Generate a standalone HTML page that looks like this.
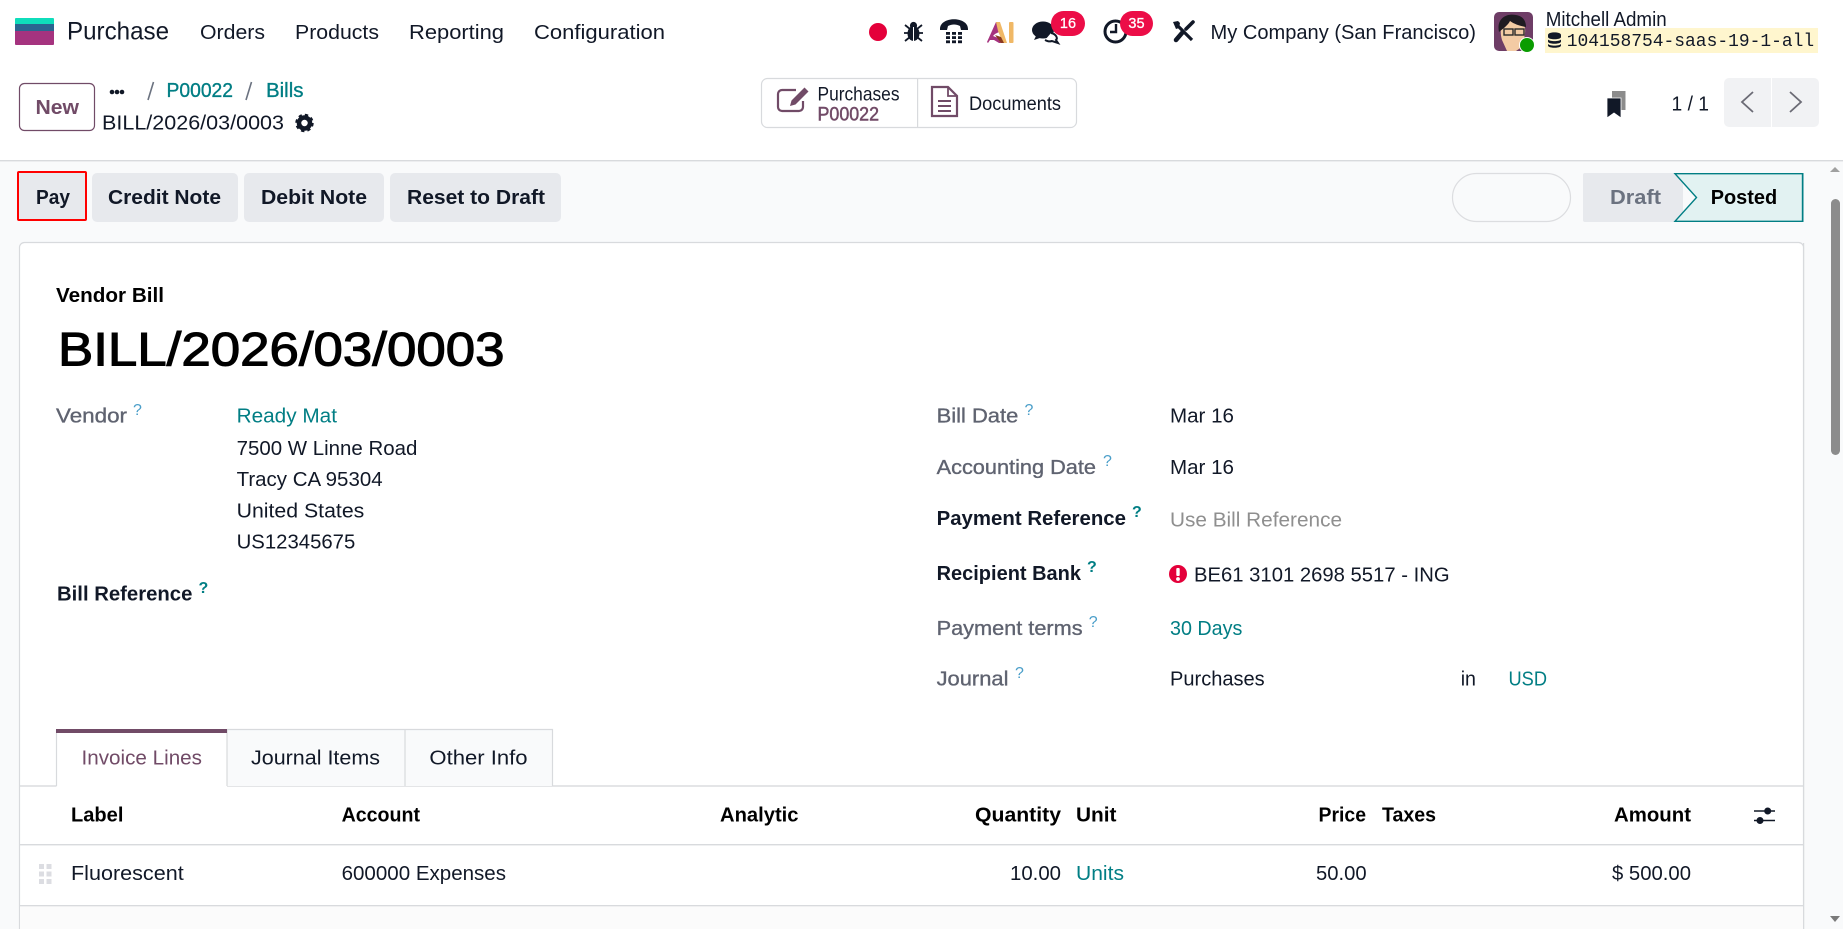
<!DOCTYPE html>
<html lang="en">
<head>
<meta charset="utf-8">
<title>Purchase - BILL/2026/03/0003</title>
<style>
html,body{margin:0;padding:0;width:1843px;height:929px;overflow:hidden;background:#fff}
svg{display:block}
text{font-family:"Liberation Sans",sans-serif;font-size:20.5px;fill:#111827}
.b{font-weight:700}
.l{fill:#017E84}
.ml{fill:#017E84;stroke:#017E84;stroke-width:.35px}
.g{fill:#5f6370;stroke:#5f6370;stroke-width:.35px}
.q{font-size:16px;fill:#4a9ec9}
.qd{font-size:16px;fill:#017E84;font-weight:700}
.p{fill:#714B67}
.k{fill:#000}
</style>
</head>
<body>
<svg width="1843" height="929" viewBox="0 0 1843 929" xmlns="http://www.w3.org/2000/svg">
<!-- backgrounds -->
<rect x="0" y="0" width="1843" height="929" fill="#fff"/>
<rect x="0" y="161" width="1843" height="768" fill="#F9FAFB"/>
<rect x="0" y="160" width="1843" height="1.4" fill="#D8DADD"/>

<!-- logo -->
<path d="M15 19a1 1 0 0 1 1-1h37a1 1 0 0 1 1 1v5H15z" fill="#0FDDBB"/>
<rect x="15" y="24" width="39" height="7" fill="#2A6590"/>
<path d="M15 31h39v13a1 1 0 0 1-1 1H16a1 1 0 0 1-1-1z" fill="#A5337F"/>

<!-- navbar -->
<text x="67" y="39.5" style="font-size:25px" textLength="102" lengthAdjust="spacingAndGlyphs">Purchase</text>
<text x="200" y="39" textLength="65" lengthAdjust="spacingAndGlyphs">Orders</text>
<text x="295" y="39" textLength="84" lengthAdjust="spacingAndGlyphs">Products</text>
<text x="409" y="39" textLength="95" lengthAdjust="spacingAndGlyphs">Reporting</text>
<text x="534" y="39" textLength="131" lengthAdjust="spacingAndGlyphs">Configuration</text>

<!-- record dot -->
<circle cx="878" cy="32" r="9" fill="#E4003A"/>
<!-- bug -->
<g fill="#111827">
<ellipse cx="913.5" cy="33.5" rx="6" ry="7.5"/>
<circle cx="913.5" cy="25.5" r="3.6"/>
<path d="M905 25l5 4M922 25l-5 4M904 33h6M923 33h-6M905 41l5-4M922 41l-5-4" stroke="#111827" stroke-width="1.8" fill="none"/>
<rect x="913" y="27" width="1" height="14" fill="#fff"/>
</g>
<!-- phone -->
<path d="M940 29c0-13 28-13 28 0v1h-7l-1-4c-4-2-8-2-12 0l-1 4h-7z" fill="#111827"/>
<g fill="#111827">
<rect x="946" y="32" width="4" height="2.800"/><rect x="952" y="32" width="4" height="2.800"/><rect x="958" y="32" width="4" height="2.800"/>
<rect x="946" y="36.200" width="4" height="2.800"/><rect x="952" y="36.200" width="4" height="2.800"/><rect x="958" y="36.200" width="4" height="2.800"/>
<rect x="946" y="40.400" width="4" height="2.800"/><rect x="952" y="40.400" width="4" height="2.800"/><rect x="958" y="40.400" width="4" height="2.800"/>
</g>
<!-- AI -->
<path d="M987 42l9-20h2l3 9-6 3-2 2 8 3 2 4h-4l-5-3h-4l-2 3z" fill="#A5337F"/>
<path d="M996 22h4l7 21h-4l-5-12z" fill="#F0B866"/>
<path d="M995 35l6 2 3 6h-3z" fill="#8A3A1E"/>
<rect x="1009" y="22" width="4.500" height="21" rx="1" fill="#F0B866"/>
<!-- chat -->
<ellipse cx="1043" cy="30" rx="11" ry="8.5" fill="#111827"/>
<path d="M1036 36l-2 4 6-2z" fill="#111827"/>
<path d="M1051 33c5 1 7 5 5 7l2 3-6-2c-3 1-5 0-7-1" fill="#fff" stroke="#111827" stroke-width="2"/>
<!-- badges -->
<rect x="1051" y="11" width="34" height="25" rx="12.5" fill="#EC0D47"/>
<text x="1068" y="28" text-anchor="middle" style="font-size:14.5px;fill:#fff" stroke="#fff" stroke-width=".3">16</text>
<!-- clock -->
<circle cx="1115.5" cy="31.5" r="10.5" fill="#fff" stroke="#111827" stroke-width="3"/>
<path d="M1116 24v8h-6" fill="none" stroke="#111827" stroke-width="2.4"/>
<rect x="1120" y="11" width="33" height="25" rx="12.5" fill="#EC0D47"/>
<text x="1136.5" y="28" text-anchor="middle" style="font-size:14.5px;fill:#fff" stroke="#fff" stroke-width=".3">35</text>
<!-- tools -->
<path d="M1176 24L1192 40" stroke="#111827" stroke-width="3.200" fill="none"/>
<path d="M1173 22l5-1 2 2-1 5-3 1z" fill="#111827"/>
<path d="M1182 33L1176 40" stroke="#111827" stroke-width="4.500" stroke-linecap="round" fill="none"/>
<path d="M1193 22l-7 7" stroke="#111827" stroke-width="3.600" stroke-linecap="round" fill="none"/>
<text x="1210.500" y="39" textLength="265.500" lengthAdjust="spacingAndGlyphs">My Company (San Francisco)</text>

<!-- avatar -->
<rect x="1494" y="12" width="39" height="39" rx="5" fill="#6E3D66"/>
<path d="M1502 40c-4-14 2-22 12-21 8 0 12 6 11 14l-2 13-7 5h-9z" fill="#F3CBA4"/>
<path d="M1499 32c-3-14 8-19 17-17 7 1 10 6 10 12-6-1-12-3-16-6-2 4-6 7-11 11z" fill="#1F1B22"/>
<rect x="1504" y="29" width="9" height="6" fill="none" stroke="#2a2a2a" stroke-width="1.4"/>
<rect x="1515" y="29" width="9" height="6" fill="none" stroke="#2a2a2a" stroke-width="1.4"/>
<circle cx="1527" cy="45" r="8" fill="#fff"/>
<circle cx="1527" cy="45" r="7" fill="#0A9C00"/>

<text x="1545.700" y="26" textLength="121" lengthAdjust="spacingAndGlyphs">Mitchell Admin</text>
<rect x="1545" y="28" width="273" height="25" fill="#FFF6CE"/>
<g fill="#111827">
<path d="M1548 35c0-3.500 13-3.500 13 0v2c0 3-13 3-13 0z"/>
<path d="M1548 39.500c2 2.200 11 2.200 13 0v2c0 3-13 3-13 0z"/>
<path d="M1548 44c2 2.200 11 2.200 13 0v1.500c0 3-13 3-13 0z"/>
</g>
<text x="1566.700" y="46" textLength="247.500" lengthAdjust="spacingAndGlyphs" style="font-family:'Liberation Mono',monospace;font-size:18px">104158754-saas-19-1-all</text>

<!-- new button -->
<rect x="19.500" y="83.500" width="75" height="47" rx="5" fill="#fff" stroke="#714B67" stroke-width="1.200"/>
<text x="35.500" y="114" class="b p" textLength="43.500" lengthAdjust="spacingAndGlyphs">New</text>

<!-- breadcrumbs -->
<circle cx="112" cy="92" r="2.300" fill="#111827"/><circle cx="117" cy="92" r="2.300" fill="#111827"/><circle cx="122" cy="92" r="2.300" fill="#111827"/>
<path d="M153.500 82L148 100M251.500 82L246 100" stroke="#6b7280" stroke-width="1.600" fill="none"/>
<text x="166.500" y="97" class="ml" textLength="66.500" lengthAdjust="spacingAndGlyphs">P00022</text>
<text x="266" y="97" class="ml" textLength="37.500" lengthAdjust="spacingAndGlyphs">Bills</text>
<text x="102" y="129.500" textLength="182" lengthAdjust="spacingAndGlyphs">BILL/2026/03/0003</text>
<circle cx="304.500" cy="123" r="5.500" fill="none" stroke="#111827" stroke-width="4.500"/>
<circle cx="304.500" cy="123" r="8" fill="none" stroke="#111827" stroke-width="2.400" stroke-dasharray="3.300 3"/>

<!-- smart buttons -->
<rect x="761.500" y="78.500" width="315" height="49" rx="6" fill="#fff" stroke="#D8DADD" stroke-width="1.200"/>
<rect x="917" y="79" width="1.200" height="48" fill="#D8DADD"/>
<path d="M803 101v6a4 4 0 0 1-4 4h-17a4 4 0 0 1-4-4V94a4 4 0 0 1 4-4h14" fill="none" stroke="#714B67" stroke-width="2.200"/>
<path d="M804.500 87.500l4 4-13 13-5.500 1.500 1.500-5.500z" fill="#714B67"/>
<text x="817.500" y="100.700" textLength="82" lengthAdjust="spacingAndGlyphs" style="font-size:19.500px">Purchases</text>
<text x="817.500" y="120.700" class="p" style="font-size:19.500px;stroke:#714B67;stroke-width:.5px" textLength="61.500" lengthAdjust="spacingAndGlyphs">P00022</text>
<path d="M932 87h16l9 9v20h-25z" fill="none" stroke="#714B67" stroke-width="2.200"/>
<path d="M948 87v9h9" fill="none" stroke="#714B67" stroke-width="1.800"/>
<path d="M938 101h13M938 106h13M938 111h13" stroke="#714B67" stroke-width="2" fill="none"/>
<text x="969" y="110" textLength="92" lengthAdjust="spacingAndGlyphs" style="font-size:19.500px">Documents</text>

<!-- bookmarks -->
<rect x="1612" y="91" width="13.500" height="19" fill="#8C8C8C"/>
<path d="M1607 98h14v20l-7-5-7 5z" fill="#111827" stroke="#fff" stroke-width=".8"/>
<text x="1671.500" y="110.700" textLength="37.500" lengthAdjust="spacingAndGlyphs">1 / 1</text>

<!-- pager -->
<rect x="1724" y="78" width="95" height="49" rx="5" fill="#F1F2F4"/>
<rect x="1771" y="78" width="1" height="49" fill="#fff"/>
<path d="M1753 92l-11 10 11 10" fill="none" stroke="#6b6b75" stroke-width="1.800"/>
<path d="M1790 92l11 10-11 10" fill="none" stroke="#6b6b75" stroke-width="1.800"/>

<!-- action buttons -->
<rect x="18" y="172" width="68" height="48" rx="1" fill="#E7E9ED" stroke="#FF0000" stroke-width="2"/>
<text x="36" y="204" class="b" textLength="34" lengthAdjust="spacingAndGlyphs">Pay</text>
<rect x="92" y="173" width="146" height="49" rx="5" fill="#E7E9ED"/>
<text x="108" y="204" class="b" textLength="113" lengthAdjust="spacingAndGlyphs">Credit Note</text>
<rect x="244" y="173" width="140" height="49" rx="5" fill="#E7E9ED"/>
<text x="261" y="204" class="b" textLength="106" lengthAdjust="spacingAndGlyphs">Debit Note</text>
<rect x="390" y="173" width="171" height="49" rx="5" fill="#E7E9ED"/>
<text x="407" y="204" class="b" textLength="138" lengthAdjust="spacingAndGlyphs">Reset to Draft</text>

<!-- status -->
<rect x="1452.500" y="173.500" width="118" height="48" rx="24" fill="none" stroke="#DCDDE0" stroke-width="1.200"/>
<rect x="1583" y="173" width="100" height="49" rx="2" fill="#E7E9ED"/>
<text x="1610" y="204" class="b" style="fill:#6b7280" textLength="51" lengthAdjust="spacingAndGlyphs">Draft</text>
<path d="M1675 173.700H1802.500V221.300H1675L1696.500 197.500z" fill="#E2F2F2" stroke="#017E84" stroke-width="1.400"/>
<rect x="1802" y="173" width="1.500" height="49" fill="#017E84"/>
<text x="1710.700" y="204" class="b k" textLength="66.500" lengthAdjust="spacingAndGlyphs">Posted</text>

<!-- sheet -->
<rect x="19.500" y="242.500" width="1784" height="720" rx="5" fill="#fff" stroke="#D8DADD" stroke-width="1.200"/>

<text x="56" y="302" class="b k" textLength="108" lengthAdjust="spacingAndGlyphs">Vendor Bill</text>
<text x="58" y="365.300" class="k" textLength="446.500" lengthAdjust="spacingAndGlyphs" style="font-size:47.500px;stroke:#000;stroke-width:1.100px">BILL/2026/03/0003</text>

<!-- left fields -->
<text x="56" y="422.700" class="g" textLength="71" lengthAdjust="spacingAndGlyphs">Vendor</text>
<text x="133" y="415" class="q">?</text>
<text x="236.600" y="422.700" class="l" textLength="100.400" lengthAdjust="spacingAndGlyphs">Ready Mat</text>
<text x="236.600" y="455" textLength="180.800" lengthAdjust="spacingAndGlyphs">7500 W Linne Road</text>
<text x="236.600" y="486" textLength="146" lengthAdjust="spacingAndGlyphs">Tracy CA 95304</text>
<text x="236.600" y="517.700" textLength="127.700" lengthAdjust="spacingAndGlyphs">United States</text>
<text x="236.600" y="548.700" textLength="118.700" lengthAdjust="spacingAndGlyphs">US12345675</text>
<text x="57" y="600.700" class="b" textLength="135.400" lengthAdjust="spacingAndGlyphs">Bill Reference</text>
<text x="198.500" y="593" class="qd">?</text>

<!-- right fields -->
<text x="936.600" y="422.700" class="g" textLength="81.700" lengthAdjust="spacingAndGlyphs">Bill Date</text>
<text x="1024.500" y="415" class="q">?</text>
<text x="1170" y="422.700" textLength="64" lengthAdjust="spacingAndGlyphs">Mar 16</text>

<text x="936.600" y="474" class="g" textLength="159.400" lengthAdjust="spacingAndGlyphs">Accounting Date</text>
<text x="1103" y="466" class="q">?</text>
<text x="1170" y="474" textLength="64" lengthAdjust="spacingAndGlyphs">Mar 16</text>

<text x="936.600" y="525" class="b" textLength="189.400" lengthAdjust="spacingAndGlyphs">Payment Reference</text>
<text x="1132" y="517" class="qd">?</text>
<text x="1170" y="526.700" style="fill:#8f8f8f" textLength="172" lengthAdjust="spacingAndGlyphs">Use Bill Reference</text>

<text x="936.600" y="580" class="b" textLength="144.400" lengthAdjust="spacingAndGlyphs">Recipient Bank</text>
<text x="1087" y="572" class="qd">?</text>
<circle cx="1178" cy="574" r="9" fill="#E4003A"/>
<rect x="1176.300" y="568" width="3.400" height="8" rx="1" fill="#fff"/>
<circle cx="1178" cy="579" r="1.900" fill="#fff"/>
<text x="1194" y="581.700" textLength="255.600" lengthAdjust="spacingAndGlyphs">BE61 3101 2698 5517 - ING</text>

<text x="936.600" y="635" class="g" textLength="146" lengthAdjust="spacingAndGlyphs">Payment terms</text>
<text x="1088.700" y="627" class="q">?</text>
<text x="1170" y="635" class="l" textLength="72.400" lengthAdjust="spacingAndGlyphs">30 Days</text>

<text x="936.600" y="685.700" class="g" textLength="71.900" lengthAdjust="spacingAndGlyphs">Journal</text>
<text x="1015" y="678" class="q">?</text>
<text x="1170" y="685.700" textLength="94.700" lengthAdjust="spacingAndGlyphs">Purchases</text>
<text x="1460.700" y="685.700" textLength="15.300" lengthAdjust="spacingAndGlyphs">in</text>
<text x="1508.500" y="685.700" class="l" textLength="38.500" lengthAdjust="spacingAndGlyphs">USD</text>

<!-- tabs -->
<rect x="20" y="785.300" width="1783" height="1.400" fill="#D8DADD"/>
<path d="M227 729.500H552.500V786H227z" fill="#F9FAFB"/>
<path d="M227 729.500H552.500V786M405 729.500V786" fill="none" stroke="#D8DADD" stroke-width="1.200"/>
<rect x="56.500" y="729.500" width="170.500" height="58" fill="#fff"/>
<path d="M56.500 730V786M227 730V786" fill="none" stroke="#D8DADD" stroke-width="1.200"/>
<rect x="56" y="729" width="171" height="4" fill="#714B67"/>
<text x="81.500" y="764.300" class="p" textLength="120.500" lengthAdjust="spacingAndGlyphs">Invoice Lines</text>
<text x="251" y="764.300" textLength="129" lengthAdjust="spacingAndGlyphs">Journal Items</text>
<text x="429.400" y="764.300" textLength="98.200" lengthAdjust="spacingAndGlyphs">Other Info</text>

<!-- table -->
<text x="71" y="821.700" class="b k" textLength="52.400" lengthAdjust="spacingAndGlyphs">Label</text>
<text x="341.600" y="821.700" class="b k" textLength="78.400" lengthAdjust="spacingAndGlyphs">Account</text>
<text x="720" y="821.700" class="b k" textLength="78.500" lengthAdjust="spacingAndGlyphs">Analytic</text>
<text x="975" y="821.700" class="b k" textLength="86" lengthAdjust="spacingAndGlyphs">Quantity</text>
<text x="1076" y="821.700" class="b k" textLength="40.500" lengthAdjust="spacingAndGlyphs">Unit</text>
<text x="1318.500" y="821.700" class="b k" textLength="47.500" lengthAdjust="spacingAndGlyphs">Price</text>
<text x="1382" y="821.700" class="b k" textLength="54" lengthAdjust="spacingAndGlyphs">Taxes</text>
<text x="1614" y="821.700" class="b k" textLength="77" lengthAdjust="spacingAndGlyphs">Amount</text>
<path d="M1754 811h21M1754 820.500h21" stroke="#111827" stroke-width="1.600" fill="none"/>
<circle cx="1767.700" cy="811" r="3.500" fill="#111827"/>
<circle cx="1760" cy="820.500" r="3.500" fill="#111827"/>
<rect x="20" y="844" width="1783" height="1.400" fill="#D8DADD"/>

<g fill="#DCDDE2">
<rect x="39" y="864" width="5" height="5"/><rect x="46.500" y="864" width="5" height="5"/>
<rect x="39" y="871.500" width="5" height="5"/><rect x="46.500" y="871.500" width="5" height="5"/>
<rect x="39" y="879" width="5" height="5"/><rect x="46.500" y="879" width="5" height="5"/>
</g>
<text x="71" y="880" textLength="112.700" lengthAdjust="spacingAndGlyphs">Fluorescent</text>
<text x="341.600" y="880" textLength="164.400" lengthAdjust="spacingAndGlyphs">600000 Expenses</text>
<text x="1010" y="880" textLength="51" lengthAdjust="spacingAndGlyphs">10.00</text>
<text x="1076" y="880" class="l" textLength="48" lengthAdjust="spacingAndGlyphs">Units</text>
<text x="1316" y="880" textLength="50.600" lengthAdjust="spacingAndGlyphs">50.00</text>
<text x="1612" y="880" textLength="79" lengthAdjust="spacingAndGlyphs">$ 500.00</text>
<rect x="20" y="905" width="1783" height="1.400" fill="#D8DADD"/>
<rect x="20" y="906.400" width="1783" height="23" fill="#FBFBFB"/>
<rect x="1803" y="243" width="1.200" height="686" fill="#D8DADD"/>

<!-- scrollbar -->
<path d="M1835 167l5 5h-10z" fill="#A0A0A0"/>
<rect x="1831" y="199" width="9" height="256" rx="4.500" fill="#8C8C8C"/>
<path d="M1835 922l5-6h-10z" fill="#7a7a7a"/>
</svg>
</body>
</html>
